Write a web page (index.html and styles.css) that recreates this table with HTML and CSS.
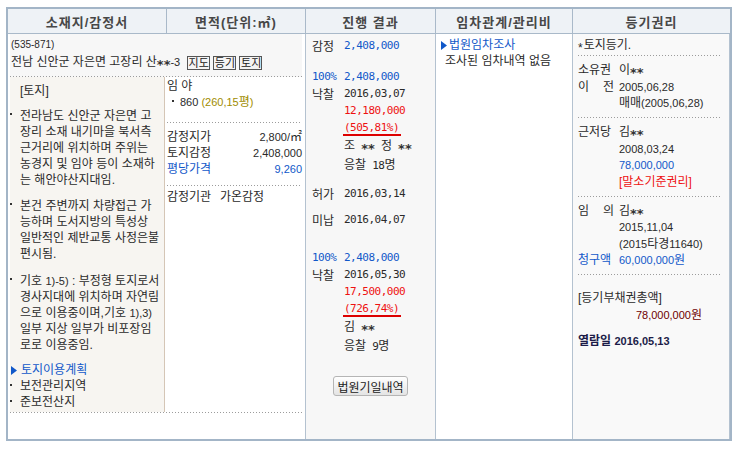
FILE: index.html
```html
<!DOCTYPE html>
<html lang="ko">
<head>
<meta charset="utf-8">
<title>경매 물건 상세</title>
<link rel="stylesheet" href="styles.css">
</head>
<body>
<div class="board">
  <div class="hc">소재지/감정서</div>
  <div class="hc">면적(단위:㎡)</div>
  <div class="hc">진행 결과</div>
  <div class="hc">임차관계/관리비</div>
  <div class="hc hc-last">등기권리</div>

  <div class="cell site">
    <div class="addr dot-b">
      <div class="zip">(535-871)</div>
      <div class="addr-line">전남 신안군 자은면 고장리 산<span class="mask">**</span><span class="n">-3</span> <span class="sbtn">지도</span><span class="sbtn">등기</span><span class="sbtn">토지</span></div>
    </div>
    <div class="site-main dot-b">
      <div class="desc">
        <p class="tag">[토지]</p>
        <ul class="blist">
          <li><span>전라남도 신안군 자은면 고<br>장리 소재 내기마을 북서측<br>근거리에 위치하며 주위는<br>농경지 및 임야 등이 소재하<br>는 해안야산지대임.</span></li>
          <li><span>본건 주변까지 차량접근 가<br>능하며 도서지방의 특성상<br>일반적인 제반교통 사정은불<br>편시됨.</span></li>
          <li class="li3"><span>기호 <span class="n">1)-5)</span> : 부정형 토지로서<br>경사지대에 위치하며 자연림<br>으로 이용중이며,기호 <span class="n">1),3)</span><br>일부 지상 일부가 비포장임<br>로로 이용중임.</span></li>
        </ul>
        <p class="plan"><svg width="6" height="9" viewBox="0 0 6 9"><path d="M0 0L6 4.5L0 9Z" fill="#1158c9"/></svg>토지이용계획</p>
        <ul class="blist tight">
          <li><span>보전관리지역</span></li>
          <li><span>준보전산지</span></li>
        </ul>
      </div>
      <div class="area">
        <div class="a-kind dot-b">
          <div>임 야</div>
          <div class="pt"><span class="dotmark"></span><span class="n">860 </span><span class="olive"><span class="n">(260,15</span>평<span class="n">)</span></span></div>
        </div>
        <div class="a-price dot-b">
          <div class="pr"><span>감정지가</span><span><span class="n">2,800/</span>㎡</span></div>
          <div class="pr"><span>토지감정</span><span class="n">2,408,000</span></div>
          <div class="pr blue"><span>평당가격</span><span class="n">9,260</span></div>
        </div>
        <div class="a-org"><span class="org-l">감정기관</span>가온감정</div>
      </div>
    </div>
  </div>

  <div class="cell prog">
    <div class="row"><span class="lb">감정</span><span class="blue">2,408,000</span></div>
    <div class="blk b2">
      <div class="row"><span class="lb lb-n blue">100%</span><span class="blue">2,408,000</span></div>
      <div class="row"><span class="lb">낙찰</span><span>2016,03,07</span></div>
      <div class="val red">12,180,000</div>
      <div class="val"><span class="rate">(505,81%)</span></div>
      <div class="val"><span class="ko">조</span> <span class="mask">**</span> <span class="ko">정</span> <span class="mask">**</span></div>
      <div class="val"><span class="ko">응찰</span> 18<span class="ko">명</span></div>
    </div>
    <div class="row b3"><span class="lb">허가</span><span>2016,03,14</span></div>
    <div class="row b4"><span class="lb">미납</span><span>2016,04,07</span></div>
    <div class="blk b5">
      <div class="row"><span class="lb lb-n blue">100%</span><span class="blue">2,408,000</span></div>
      <div class="row"><span class="lb">낙찰</span><span>2016,05,30</span></div>
      <div class="val red">17,500,000</div>
      <div class="val"><span class="rate">(726,74%)</span></div>
      <div class="val"><span class="ko">김</span> <span class="mask">**</span></div>
      <div class="val"><span class="ko">응찰</span> 9<span class="ko">명</span></div>
    </div>
    <button class="court-btn" type="button">법원기일내역</button>
  </div>

  <div class="cell lease">
    <div class="lease-t"><svg width="6" height="9" viewBox="0 0 6 9"><path d="M0 0L6 4.5L0 9Z" fill="#1158c9"/></svg>법원임차조사</div>
    <div class="lease-d">조사된 임차내역 없음</div>
  </div>

  <div class="cell reg">
    <div class="rsec r1 dot-b"><span class="star">*</span>토지등기.</div>
    <div class="rsec dot-b">
      <div class="kv"><span class="k">소유권</span><span>이<span class="mask">**</span></span></div>
      <div class="kv"><span class="k just">이 전</span><span class="n">2005,06,28</span></div>
      <div class="v">매매<span class="n">(2005,06,28)</span></div>
    </div>
    <div class="rsec dot-b">
      <div class="kv"><span class="k">근저당</span><span>김<span class="mask">**</span></span></div>
      <div class="v n">2008,03,24</div>
      <div class="v n blue">78,000,000</div>
      <div class="v red">[말소기준권리]</div>
    </div>
    <div class="rsec dot-b">
      <div class="kv"><span class="k just">임 의</span><span>김<span class="mask">**</span></span></div>
      <div class="v n">2015,11,04</div>
      <div class="v"><span class="n">(2015</span>타경<span class="n">11640)</span></div>
      <div class="kv blue"><span class="k">청구액</span><span><span class="n">60,000,000</span>원</span></div>
    </div>
    <div class="rsec r5">
      <div>[등기부채권총액]</div>
      <div class="total"><span class="n">78,000,000</span>원</div>
      <div class="viewed">열람일 <span class="n">2016,05,13</span></div>
    </div>
  </div>
</div>
</body>
</html>
```
FILE: styles.css
```css
* { box-sizing: border-box; }
body {
  margin: 0;
  background: #fff;
  font-family: "Liberation Sans", "Noto Sans CJK KR", sans-serif;
  font-size: 12px;
  color: #2a2a2a;
}
p, ul { margin: 0; padding: 0; list-style: none; }

.n { font-size: 11px; }

.board {
  margin: 7px 0 0 6px;
  width: 726px;
  height: 434px;
  border: 2px solid #a3b5c7;
  display: grid;
  grid-template-columns: 159px 139px 130px 137px 157px;
  grid-template-rows: 25px 405px;
}

.hc {
  background: #eef2f6;
  border-bottom: 1px solid #a9b9c9;
  border-right: 1px solid #a9b9c9;
  display: flex;
  align-items: center;
  justify-content: center;
  font-weight: bold;
  font-size: 13px;
  letter-spacing: 1px;
  color: #474747;
}
.hc-last { border-right: 0; }

.cell { border-right: 1px solid #b4c2d0; }

.blue { color: #1158c9; }
.red { color: #ee1111; }
.olive { color: #a08c00; }

.dot-b {
  background-image: linear-gradient(to right, #9c9c9c 1px, transparent 1px);
  background-size: 3px 1px;
  background-repeat: repeat-x;
  background-position: left bottom;
}

.mask {
  font-family: "DejaVu Sans", sans-serif;
  font-weight: bold;
  font-size: 13px;
  letter-spacing: 0;
  line-height: 0;
  vertical-align: -3px;
  color: #333;
}
.star {
  line-height: 0;
  vertical-align: -3px;
  margin-right: 1px;
}

/* ---- site column ---- */
.site {
  grid-column: span 2;
  padding: 0 3px 0 2px;
}
.addr {
  background-color: #f7f7f7;
  padding: 3px 0 5px 1px;
  line-height: 16px;
}
.zip { font-size: 10px; }
.addr-line {
  height: 19px;
  line-height: 19px;
  white-space: nowrap;
}
.sbtn {
  display: inline-block;
  vertical-align: middle;
  border: 1px solid #555;
  background: #f4f4f4;
  font-size: 11px;
  line-height: 12px;
  padding: 0 0 0 1px;
  margin-left: 3px;
  color: #222;
}
.site-main {
  display: flex;
  padding-bottom: 1px;
}
.desc {
  width: 155px;
  flex: none;
  background: #f7f5f1;
  border-right: 1px solid #d5c6b6;
  padding: 6px 0 2px 10px;
  line-height: 16px;
  white-space: nowrap;
}
.blist { margin-top: 9px; }
.blist li {
  display: flex;
  align-items: flex-start;
  margin-left: -10px;
}
.blist li + li { margin-top: 10px; }
.blist li.li3 { margin-top: 11px; }
.blist li::before {
  content: "";
  flex: none;
  width: 2px;
  height: 2px;
  background: #333;
  margin: 5px 8px 0 0;
}
.blist.tight { margin-top: 0; }
.blist.tight li + li { margin-top: 0; }
.blist.tight li::before { margin-top: 6px; }
.plan {
  margin: 9px 0 0 -9px;
  display: flex;
  align-items: center;
  gap: 4px;
  color: #1158c9;
}

.area {
  flex: 1;
  padding-left: 2px;
  line-height: 16px;
}
.a-kind { padding: 1px 0 13px; }
.pt {
  display: flex;
  align-items: flex-start;
  padding-left: 5px;
  white-space: pre;
}
.dotmark {
  width: 2px;
  height: 2px;
  background: #333;
  margin: 6px 6px 0 0;
}
.a-price { padding: 6px 0 9px; }
.pr {
  display: flex;
  justify-content: space-between;
}
.a-org { padding-top: 3px; }
.org-l { display: inline-block; width: 53px; }

/* ---- progress column ---- */
.prog {
  background: #f7f7f7;
  padding: 3px 6px 0;
  line-height: 17px;
  font-family: "DejaVu Sans Mono", "Noto Sans CJK KR", monospace;
  font-size: 11px;
  letter-spacing: -0.5px;
}
.prog .row { display: flex; }
.prog .lb {
  width: 32px;
  flex: none;
  font-family: "Noto Sans CJK KR", sans-serif;
  font-size: 12px;
  letter-spacing: 0;
}
.prog .lb-n {
  font-family: "DejaVu Sans Mono", monospace;
  font-size: 11px;
  letter-spacing: -0.5px;
}
.prog .ko {
  font-family: "Noto Sans CJK KR", sans-serif;
  font-size: 12px;
  letter-spacing: 0;
}
.prog .val { padding-left: 32px; }
.b2 { margin-top: 14px; }
.b3 { margin-top: 11px; }
.b4 { margin-top: 9px; }
.b5 { margin-top: 21px; }
.rate {
  display: inline-block;
  line-height: 13px;
  border-bottom: 2px solid #dd0000;
  margin-left: -1px;
  padding: 0 2px 0 1px;
  color: #ee1111;
}
.court-btn {
  display: block;
  margin: 21px auto 0;
  width: 75px;
  height: 20px;
  padding: 0;
  border: 1px solid #b5b5b5;
  border-radius: 3px;
  background: linear-gradient(#ffffff, #e4e4e4);
  font-family: "Noto Sans CJK KR", sans-serif;
  font-size: 12px;
  letter-spacing: 0;
  color: #222;
}

/* ---- lease column ---- */
.lease {
  padding: 3px 5px 0;
  line-height: 16px;
}
.lease-t {
  display: flex;
  align-items: center;
  gap: 2px;
  color: #1158c9;
}
.lease-d { padding-left: 4px; }

/* ---- registry column ---- */
.reg {
  background: #f9f9f9;
  padding: 0 7px 0 5px;
  line-height: 16.5px;
}
.rsec { padding: 6px 0 6.5px; }
.rsec.r1 { padding: 3px 0 2.5px; }
.rsec.r5 { padding: 15px 0 0; }
.kv { display: flex; white-space: nowrap; }
.k { width: 36px; margin-right: 5px; flex: none; }
.just { text-align-last: justify; }
.v { padding-left: 41px; }
.total {
  text-align: right;
  padding-right: 20px;
  color: #6e0000;
}
.viewed {
  margin-top: 10px;
  font-weight: bold;
  color: #1c1c48;
}
```
